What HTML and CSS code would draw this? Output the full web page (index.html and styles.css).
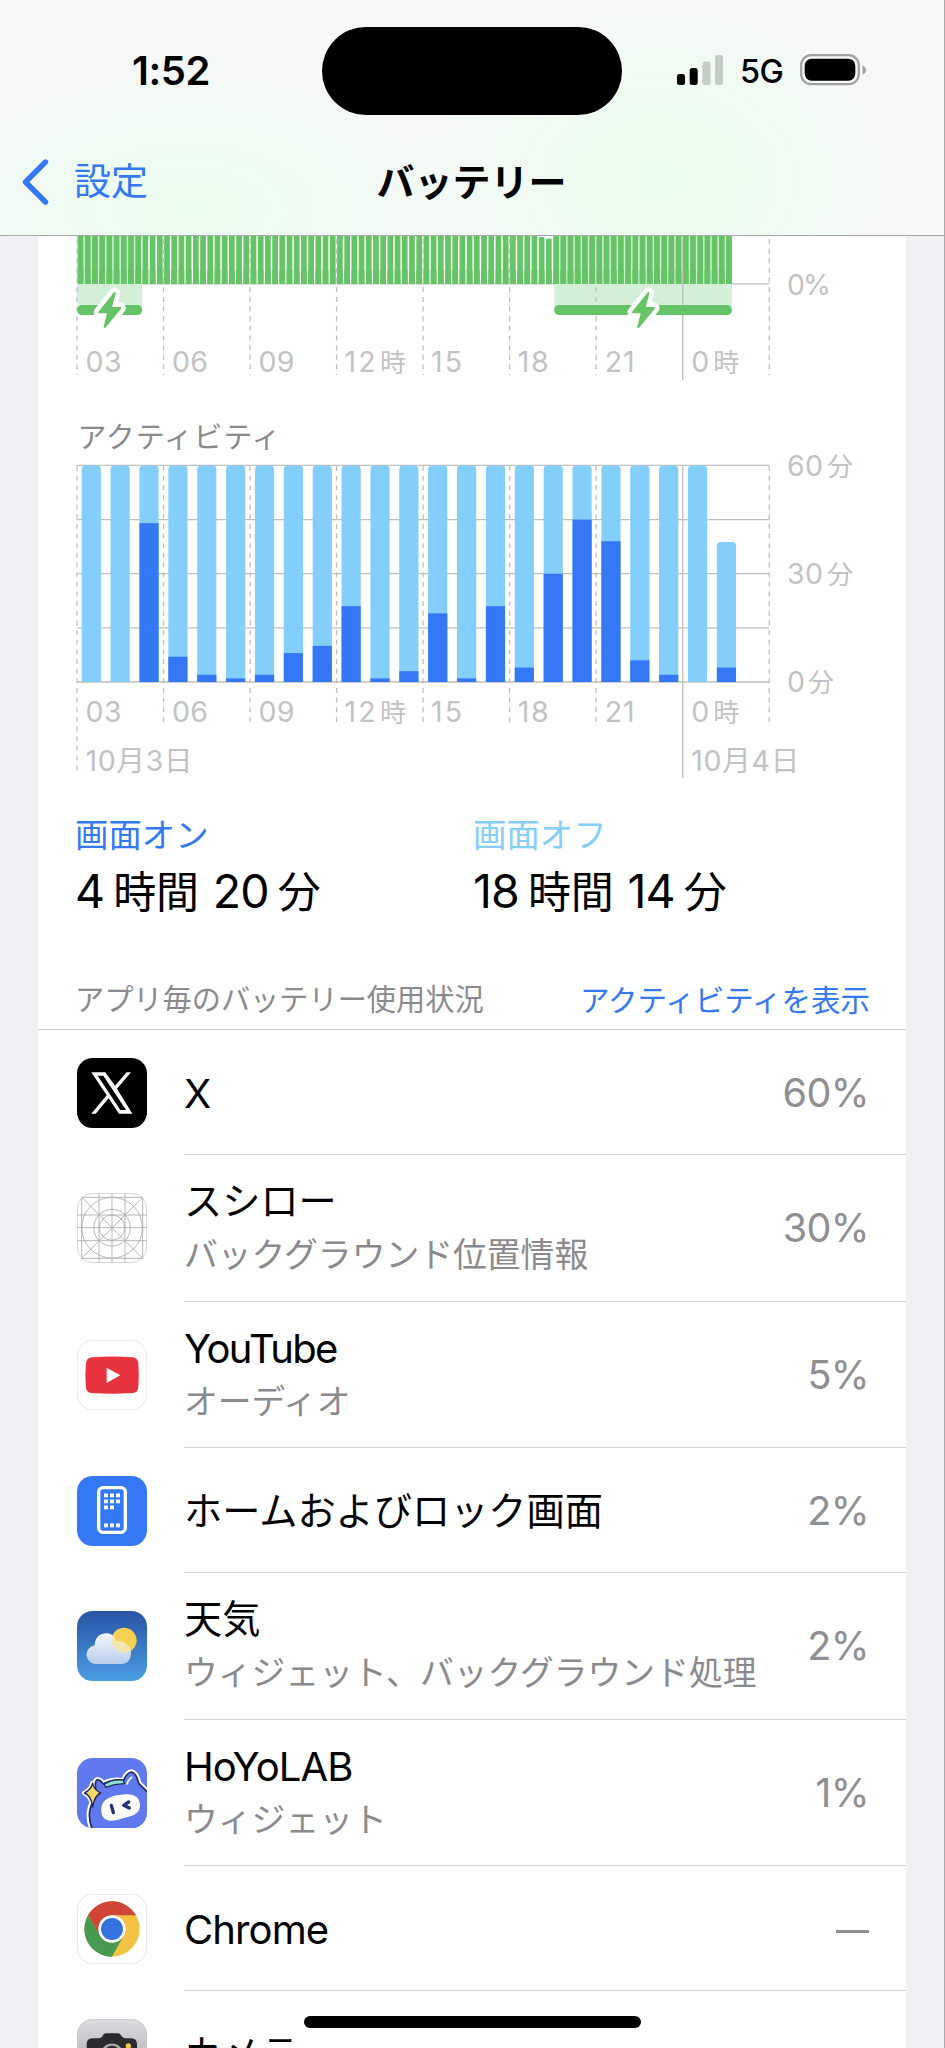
FILE: index.html
```html
<!DOCTYPE html>
<html lang="ja">
<head>
<meta charset="utf-8">
<title>バッテリー</title>
<link rel="stylesheet" href="styles.css">
</head>
<body>
<header class="top">
  <div class="status">
    <span class="time">1:52</span>
    <span class="island"></span>
    <div class="status-right">
      <svg class="signal" viewBox="0 0 46 32" width="46" height="32"><rect x="0" y="20" width="8" height="11" rx="2.5"/><rect x="12.7" y="14" width="8" height="17" rx="2.5"/><rect x="25.5" y="7.5" width="8" height="23.5" rx="2.5" fill="#c4ccc5"/><rect x="38" y="1" width="8" height="30" rx="2.5" fill="#c4ccc5"/></svg>
      <span class="net">5G</span>
      <svg class="batt" viewBox="0 0 67 32" width="67" height="32"><rect x="1.2" y="1.2" width="57.6" height="29" rx="10" fill="none" stroke="#a0a2a1" stroke-width="2.2"/><rect x="4.7" y="4.7" width="50.6" height="22" rx="7"/><path d="M62.5 11.5Q66 13 66 16T62.5 20.5Z" fill="#a0a2a1"/></svg>
    </div>
  </div>
  <nav class="nav">
    <a class="back"><svg viewBox="0 0 28 46" width="28" height="46"><path d="M24.5 3 4.5 23l20 20" fill="none" stroke="#3478f6" stroke-width="5.4" stroke-linecap="round" stroke-linejoin="round"/></svg><span>設定</span></a>
    <h1>バッテリー</h1>
  </nav>
</header>
<main class="card">
  <svg id="charts" class="charts" viewBox="38 236 868 550" width="868" height="550"></svg>
  <section class="totals">
    <div><p class="label on">画面オン</p><p class="dur"><span>4</span><span class="u">時間</span><span class="n">20</span><span class="u">分</span></p></div>
    <div><p class="label off">画面オフ</p><p class="dur"><span>18</span><span class="u">時間</span><span class="n">14</span><span class="u">分</span></p></div>
  </section>
  <div class="list-head"><span>アプリ毎のバッテリー使用状況</span><a>アクティビティを表示</a></div>
  <ul class="apps">
    <li>
      <svg class="icon" viewBox="0 0 210 210"><rect width="210" height="210" rx="47"/><path fill="#fff" fill-rule="evenodd" d="M43 43H85L114 83 149 43H162L120 92 166 167H126L95 121 56 167H43L89 112ZM62 53 130 156H147L79 53Z"/></svg>
      <div class="row"><div class="txt"><p class="name en">X</p></div><span class="val">60%</span></div>
    </li>
    <li class="tall">
      <svg class="icon" viewBox="0 0 210 210" fill="none" stroke="#adadad" stroke-width="2.6"><rect x="1" y="1" width="208" height="208" rx="46" stroke="#cfcfcf"/><path d="M14 14V196M66 1V209M105 1V209M144 1V209M197 14V196M14 13H197M1 66H209M1 104H209M1 143H209M14 196H197M14 13 197 196M197 13 14 196"/><circle cx="105" cy="104" r="91"/><circle cx="105" cy="104" r="55"/><circle cx="105" cy="104" r="38"/></svg>
      <div class="row"><div class="txt"><p class="name">スシロー</p><p class="sub">バックグラウンド位置情報</p></div><span class="val">30%</span></div>
    </li>
    <li class="tall">
      <svg class="icon" viewBox="0 0 210 210"><rect x="1" y="1" width="208" height="208" rx="46" fill="#fff" stroke="#dcdcdc" stroke-width="2"/><path fill="#e9333f" d="M44 52Q105 47 167 52 182 54 184 69 187 105 184 143 182 157 167 159 105 164 44 159 29 157 27 143 23 105 27 69 29 54 44 52Z"/><path d="M89 83 130 106 89 129Z" fill="#fff"/></svg>
      <div class="row"><div class="txt"><p class="name en yt">YouTube</p><p class="sub">オーディオ</p></div><span class="val">5%</span></div>
    </li>
    <li>
      <svg class="icon" viewBox="0 0 210 210"><rect width="210" height="210" rx="47" fill="#3478f6"/><rect x="65" y="35" width="80" height="134" rx="13" fill="none" stroke="#fff" stroke-width="10"/><path stroke="#fff" stroke-width="11" d="M81 58H93M99 58H111M117 58H129M81 76H93M99 76H111M117 76H129M81 94H93M99 94H111M81 148H93M99 148H111M117 148H129"/></svg>
      <div class="row"><div class="txt"><p class="name">ホームおよびロック画面</p></div><span class="val">2%</span></div>
    </li>
    <li class="tall">
      <svg class="icon" viewBox="0 0 210 210"><defs><linearGradient id="sky" x2="0" y2="1"><stop stop-color="#2853a5"/><stop offset="1" stop-color="#4a9ee2"/></linearGradient><linearGradient id="cloud" x2="0" y2="1"><stop stop-color="#f3f6fd"/><stop offset="1" stop-color="#b9cdec"/></linearGradient><clipPath id="sun"><circle cx="141" cy="88" r="38"/></clipPath></defs><rect width="210" height="210" rx="47" fill="url(#sky)"/><circle cx="141" cy="88" r="38" fill="#f6d052"/><path fill="url(#cloud)" d="M60 159A28 28 0 0 1 53 103C53 80 69 67 88 67 102 67 111 74 116 91 143 89 162 104 162 126 162 148 149 159 134 159Z"/><path clip-path="url(#sun)" fill="#f3e8a6" opacity=".85" d="M104 75Q111 82 116 91C143 89 162 104 162 126H104Z"/></svg>
      <div class="row"><div class="txt"><p class="name">天気</p><p class="sub">ウィジェット、バックグラウンド処理</p></div><span class="val">2%</span></div>
    </li>
    <li class="tall">
      <svg class="icon" viewBox="0 0 210 210"><defs><clipPath id="hc"><rect width="210" height="210" rx="47"/></clipPath></defs><g clip-path="url(#hc)" stroke-linejoin="round" stroke-linecap="round"><rect width="210" height="210" fill="#6179ee"/><g fill="#6179ee"><path stroke="#fff" stroke-width="17" d="M49 220Q34 190 38 160 41 145 46 133L57 97Q52 70 60 66 68 64 79 78 105 62 139 69 149 43 164 42 178 45 185 76L213 104V220Z"/><path stroke="#fff" stroke-width="14" d="M47 75Q50 96 72 105 52 112 47 147 43 112 22 105 43 95 47 75Z"/><path stroke="#1f2863" stroke-width="5" d="M49 220Q34 190 38 160 41 145 46 133L57 97Q52 70 60 66 68 64 79 78 105 62 139 69 149 43 164 42 178 45 185 76L213 104V220Z"/></g><path fill="#8be0cd" stroke="#1f2863" stroke-width="4" d="M82 79Q105 62 139 66L142 77Q112 78 86 88Z"/><path stroke="#fff" stroke-width="5" fill="none" d="M150 78Q154 65 164 58"/><path fill="#f5d765" stroke="#1f2863" stroke-width="4" d="M47 75Q50 96 72 105 52 112 47 147 43 112 22 105 43 95 47 75Z"/><path fill="#fff" d="M73 151C75 121 111 111 145 109 176 107 190 122 189 145 187 170 165 174 140 180 105 192 70 196 73 151Z"/><path fill="none" stroke="#243075" stroke-width="10" d="M103 142 109 164M155 132 140 142 157 150"/></g></svg>
      <div class="row"><div class="txt"><p class="name en">HoYoLAB</p><p class="sub">ウィジェット</p></div><span class="val">1%</span></div>
    </li>
    <li>
      <svg class="icon" viewBox="0 0 210 210"><rect x="1" y="1" width="208" height="208" rx="46" fill="#fff" stroke="#d8d8d8" stroke-width="2"/><circle cx="105" cy="105" r="83" fill="#f3c244"/><path fill="#479a50" d="M33.4 63 69.5 125.5 105 105 140.5 125.5 104.4 188A83 83 0 0 1 33.4 63Z"/><path fill="#d04535" d="M33.4 63A83 83 0 0 1 177.2 64H105V105L69.5 125.5Z"/><circle cx="105" cy="105" r="41" fill="#fff"/><circle cx="105" cy="105" r="33" fill="#3671e0"/></svg>
      <div class="row"><div class="txt"><p class="name en">Chrome</p></div><span class="val"><i class="dash"></i></span></div>
    </li>
    <li>
      <svg class="icon" viewBox="0 0 210 210"><defs><linearGradient id="cam" x2="0" y2="1"><stop stop-color="#dcdbe0"/><stop offset="1" stop-color="#9b9aa0"/></linearGradient></defs><rect x="1" y="1" width="208" height="208" rx="46" fill="url(#cam)" stroke="#bbb" stroke-width="2"/><path fill="#2b2b2d" d="M46 58H66Q74 57 77 50 80 43 88 43H122Q130 43 133 50 137 57 145 58H163Q180 58 180 76V145Q180 161 163 161H46Q29 161 29 145V76Q29 58 46 58Z"/><circle cx="105" cy="107" r="30" fill="#2b2b2d" stroke="#a9a9ae" stroke-width="7"/><circle cx="154" cy="81" r="8" fill="#f5c842"/></svg>
      <div class="row"><div class="txt"><p class="name">カメラ</p></div></div>
    </li>
  </ul>
</main>
<div class="home"></div>
<script src="charts.js"></script>
</body>
</html>
```
FILE: styles.css
```css
* { box-sizing: border-box; }
body {
  margin: 0;
  width: 945px;
  height: 2048px;
  overflow: hidden;
  position: relative;
  background: #f0f0f5;
  border-right: 1px solid #a9a9ab;
  font-family: Inter, "Noto Sans CJK JP", sans-serif;
  color: #000;
}
p, h1, ul { margin: 0; padding: 0; font-weight: 400; list-style: none; }
.top {
  height: 236px;
  border-bottom: 1px solid #a5a8a6;
  background:
    radial-gradient(ellipse 260px 200px at 660px 180px, #e9fdec, transparent),
    radial-gradient(ellipse 300px 160px at 190px 210px, #eafdee, transparent),
    #f7f8f8;
}
.status { height: 116px; padding: 27px 77px 0 132px; display: flex; }
.time { width: 190px; font-size: 40px; font-weight: 600; line-height: 87px; letter-spacing: -0.4px; }
.island { width: 301px; height: 88px; border-radius: 44px; background: #000; }
.status-right { flex: 1; padding: 27px 0 0 55px; display: flex; }
.signal { flex: none; }
.net { width: 60px; margin-left: 17px; font-size: 32.5px; font-weight: 500; line-height: 35px; letter-spacing: -0.5px; }
.batt { flex: none; }
.nav { height: 119px; padding-top: 12px; display: grid; grid-template-columns: 250px 443px 251px; align-items: center; }
.back { display: flex; align-items: center; gap: 25px; padding-left: 21px; color: #3478f6; font-size: 37px; }
.nav h1 { text-align: center; font-size: 38px; font-weight: 600; line-height: 60px; }
.back span { line-height: 60px; }
.card { margin-left: 38px; width: 868px; background: #fff; }
.charts { display: block; }
.charts text { font-size: 28.5px; fill: #c2c2c4; }
.totals { height: 173px; padding: 28px 0 0 37px; display: grid; grid-template-columns: 398px 1fr; }
.label { font-size: 33.4px; line-height: 42px; }
.on { color: #3478f6; }
.off { color: #84cefb; }
.dur { display: flex; align-items: baseline; font-size: 46.5px; line-height: 70px; letter-spacing: -0.8px; }
.dur .u { font-size: 43px; margin-left: 9px; letter-spacing: -0.3px; }
.dur .n { margin-left: 14px; }
.list-head { height: 71px; padding: 22px 36px 0 37px; display: flex; justify-content: space-between; border-bottom: 1.5px solid #cfcfd1; font-size: 29.2px; line-height: 38px; color: #8a8a8e; }
.list-head a { color: #3478f6; font-size: 29.5px; }
.apps li { height: 125px; padding-left: 39px; display: flex; align-items: center; }
.apps li.tall { height: 146.5px; }
.icon { width: 70px; height: 70px; flex: none; }
.row { flex: 1; height: 100%; margin-left: 37px; padding: 1px 37px 0 0; display: flex; align-items: center; justify-content: space-between; border-bottom: 1.5px solid #d3d3d5; }
.name { font-size: 38.2px; line-height: 54px; white-space: nowrap; }
.en { font-size: 40px; letter-spacing: -0.9px; padding-top: 1px; line-height: 53px; }
.yt { letter-spacing: -1.6px; }
.sub { font-size: 33.8px; line-height: 54px; color: #8a8a8e; white-space: nowrap; }
.val { font-size: 39.5px; letter-spacing: -0.6px; color: #8e8e93; }
.dash { display: block; width: 33px; height: 3px; margin-top: 5px; background: #8e8e93; }
.home { position: absolute; left: 304px; top: 2016px; width: 337px; height: 12px; border-radius: 6px; background: #000; }
```
FILE: charts.js
```js
const parts = [];
const add = s => parts.push(s);
const left = 77, step = 86.53, right = left + step * 8;
const xs = Array.from({ length: 9 }, (_, i) => left + step * i);

const rect = (x, y, w, h, fill, extra = '') =>
  add(`<rect x="${x}" y="${y}" width="${w}" height="${h}" fill="${fill}" ${extra}/>`);
const line = (x1, y1, x2, y2, extra = '') =>
  add(`<line x1="${x1}" y1="${y1}" x2="${x2}" y2="${y2}" stroke="#bfbfc1" stroke-width="1.3" ${extra}/>`);
const text = (x, y, s, len, extra = '') =>
  add(`<text x="${x}" y="${y}" textLength="${len}" lengthAdjust="spacing" ${extra}>${s}</text>`);

function hours(base) {
  ['03', '06', '09', '12', '15', '18', '21', '0'].forEach((h, i) => {
    const one = h[0] === '1';
    text(xs[i] + (one ? 8 : 8.5), base, h, h === '0' ? 17.5 : one ? 31 : h === '21' ? 30 : 36);
    if (h === '12') text(xs[i] + 43.5, base, '時', 26, 'style="font-size:26px"');
    if (h === '0') text(xs[i] + 30.5, base, '時', 26, 'style="font-size:26px"');
  });
}
function grid(top, bottom, firstBottom, solidBottom) {
  xs.forEach((x, i) => {
    if (i === 7) line(x, top, x, solidBottom);
    else line(x, top, x, i ? bottom : firstBottom, 'stroke-dasharray="5 4.65"');
  });
}

/* Battery level, one bar per quarter hour, with charging spans */
line(left, 283.8, right, 283.8);
rect(77.3, 236, 64.7, 70, '#d4efd8');
rect(554.3, 236, 177.5, 70, '#d4efd8');
for (let i = 0; i < 91; i++) {
  const top = i === 64 ? 237 : i === 65 ? 238.5 : 230;
  rect(77.7 + i * 7.205, top, 5.7, 284 - top, '#65c466', 'rx="1.5"');
  rect(77.7 + i * 7.205, 270, 5.7, 14, '#65c466');
}
grid(239, 375, 375, 380);
for (const [x, w, cx] of [[77.3, 64.7, 109.3], [554.3, 177.5, 643]]) {
  rect(x, 305, w, 10, '#65c466', 'rx="4.5"');
  const d = `M${cx + 5.5} 293 ${cx - 10} 312.3H${cx - 1}L${cx - 4.7} 327 ${cx + 11} 308H${cx + 1.5}Z`;
  add(`<clipPath id="c${cx | 0}"><rect x="${cx - 25}" y="284" width="50" height="34"/></clipPath>`);
  add(`<path d="${d}" fill="#fff" stroke="#fff" stroke-width="11" stroke-linejoin="round" clip-path="url(#c${cx | 0})"/>`);
  add(`<path d="${d}" fill="#65c466" stroke="#65c466" stroke-width="2" stroke-linejoin="round"/>`);
}
hours(371.5);
text(787, 294.5, '0%', 44);

/* Minutes of use per hour */
text(77.5, 447.5, 'アクティビティ', 203, 'style="font-size:29px;fill:#8a8a8e"');
const y0 = 682, h60 = 216.6;
for (let i = 0; i < 5; i++) line(left, y0 - h60 / 4 * i, right, y0 - h60 / 4 * i);
const on = [0,0,44,7,2,1,2,8,10,21,1,3,19,1,21,4,30,45,39,6,2,0,4];
on.forEach((v, i) => {
  const total = (i === 22 ? 38.8 : 60) * h60 / 60, x = 81.7 + i * 28.87;
  add(`<path fill="#84cefb" d="M${x} ${y0}V${y0 - total + 4}q0-4 4-4h11.2q4 0 4 4V${y0}z"/>`);
  rect(x, y0 - v * h60 / 60, 19.2, v * h60 / 60, '#3478f6');
});
grid(466, 725, 774, 778);
hours(721.7);
text(85.5, 770.7, '10月3日', 107);
text(xs[7] + 8.5, 770.7, '10月4日', 108);
[['60', 476, 36, 827], ['30', 584, 36, 827], ['0', 692, 17.5, 808]].forEach(([n, y, w, ux]) => {
  text(787, y, n, w);
  text(ux, y, '分', 26, 'style="font-size:26px"');
});
document.getElementById('charts').innerHTML = parts.join('');
```
